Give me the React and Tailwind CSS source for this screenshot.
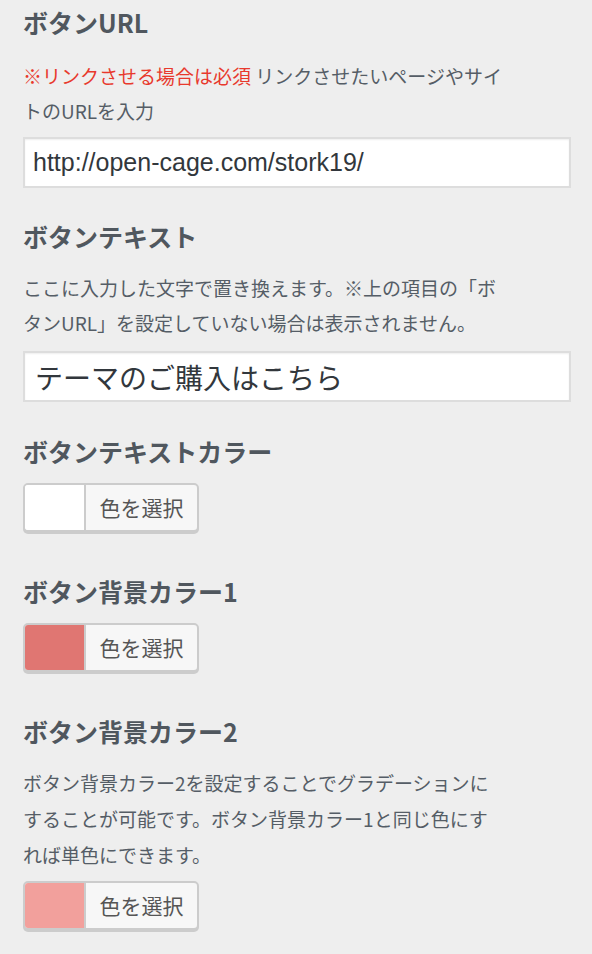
import { useState } from "react";

const jp = "font-['Noto_Sans_CJK_JP','Noto_Sans',sans-serif]";

function Title({ children, className = "" }) {
  return (
    <h3 className={`text-[25px] leading-[44px] font-bold text-[#50575e] ${className}`}>
      {children}
    </h3>
  );
}

function Desc({ children, className = "" }) {
  return (
    <p className={`w-[530px] text-[19px] text-[#555d66] ${className}`}>{children}</p>
  );
}

function ColorButton({ color }) {
  return (
    <button
      type="button"
      className="flex h-[49px] w-[176px] overflow-hidden rounded-[5px] border-2 border-[#cccccc] bg-[#f7f7f7] shadow-[0_2px_0_#cccccc]"
    >
      <span className="h-full w-[61px] border-r-2 border-[#cccccc]" style={{ backgroundColor: color }} />
      <span className="flex flex-1 items-center justify-center text-[21px] text-[#555555]">色を選択</span>
    </button>
  );
}

export default function App() {
  const [url, setUrl] = useState("http://open-cage.com/stork19/");
  const [label, setLabel] = useState("テーマのご購入はこちら");

  return (
    <div className={`min-h-screen bg-[#eeeeee] px-[23px] pb-6 ${jp}`}>
      {/* ボタンURL */}
      <Title>ボタンURL</Title>
      <Desc className="mt-[14px] leading-[35px]">
        <span className="text-[#e8392d]">※リンクさせる場合は必須</span> リンクさせたいページやサイ
        <br />
        トのURLを入力
      </Desc>
      <input
        value={url}
        onChange={(e) => setUrl(e.target.value)}
        className="mt-[9px] block h-[51px] w-[548px] border-2 border-[#dddddd] bg-white px-[8px] font-['Liberation_Sans',Arial,sans-serif] text-[25px] text-[#32373c] shadow-[inset_0_1px_2px_rgba(0,0,0,0.07)] outline-none"
      />

      {/* ボタンテキスト */}
      <Title className="mt-[26px]">ボタンテキスト</Title>
      <Desc className="mt-[12px] leading-[35px]">
        ここに入力した文字で置き換えます。※上の項目の「ボ
        <br />
        タンURL」を設定していない場合は表示されません。
      </Desc>
      <input
        value={label}
        onChange={(e) => setLabel(e.target.value)}
        className="mt-[11px] block h-[51px] w-[548px] border-2 border-[#dddddd] bg-white px-[10px] text-[28px] text-[#32373c] shadow-[inset_0_1px_2px_rgba(0,0,0,0.07)] outline-none"
      />

      {/* ボタンテキストカラー */}
      <Title className="mt-[27px]">ボタンテキストカラー</Title>
      <div className="mt-[10px]">
        <ColorButton color="#ffffff" />
      </div>

      {/* ボタン背景カラー1 */}
      <Title className="mt-[37px]">ボタン背景カラー1</Title>
      <div className="mt-[10px]">
        <ColorButton color="#e07672" />
      </div>

      {/* ボタン背景カラー2 */}
      <Title className="mt-[37px]">ボタン背景カラー2</Title>
      <Desc className="mt-[12px] leading-[36px]">
        ボタン背景カラー2を設定することでグラデーションに
        <br />
        することが可能です。ボタン背景カラー1と同じ色にす
        <br />
        れば単色にできます。
      </Desc>
      <div className="mt-[8px]">
        <ColorButton color="#f2a09c" />
      </div>
    </div>
  );
}
